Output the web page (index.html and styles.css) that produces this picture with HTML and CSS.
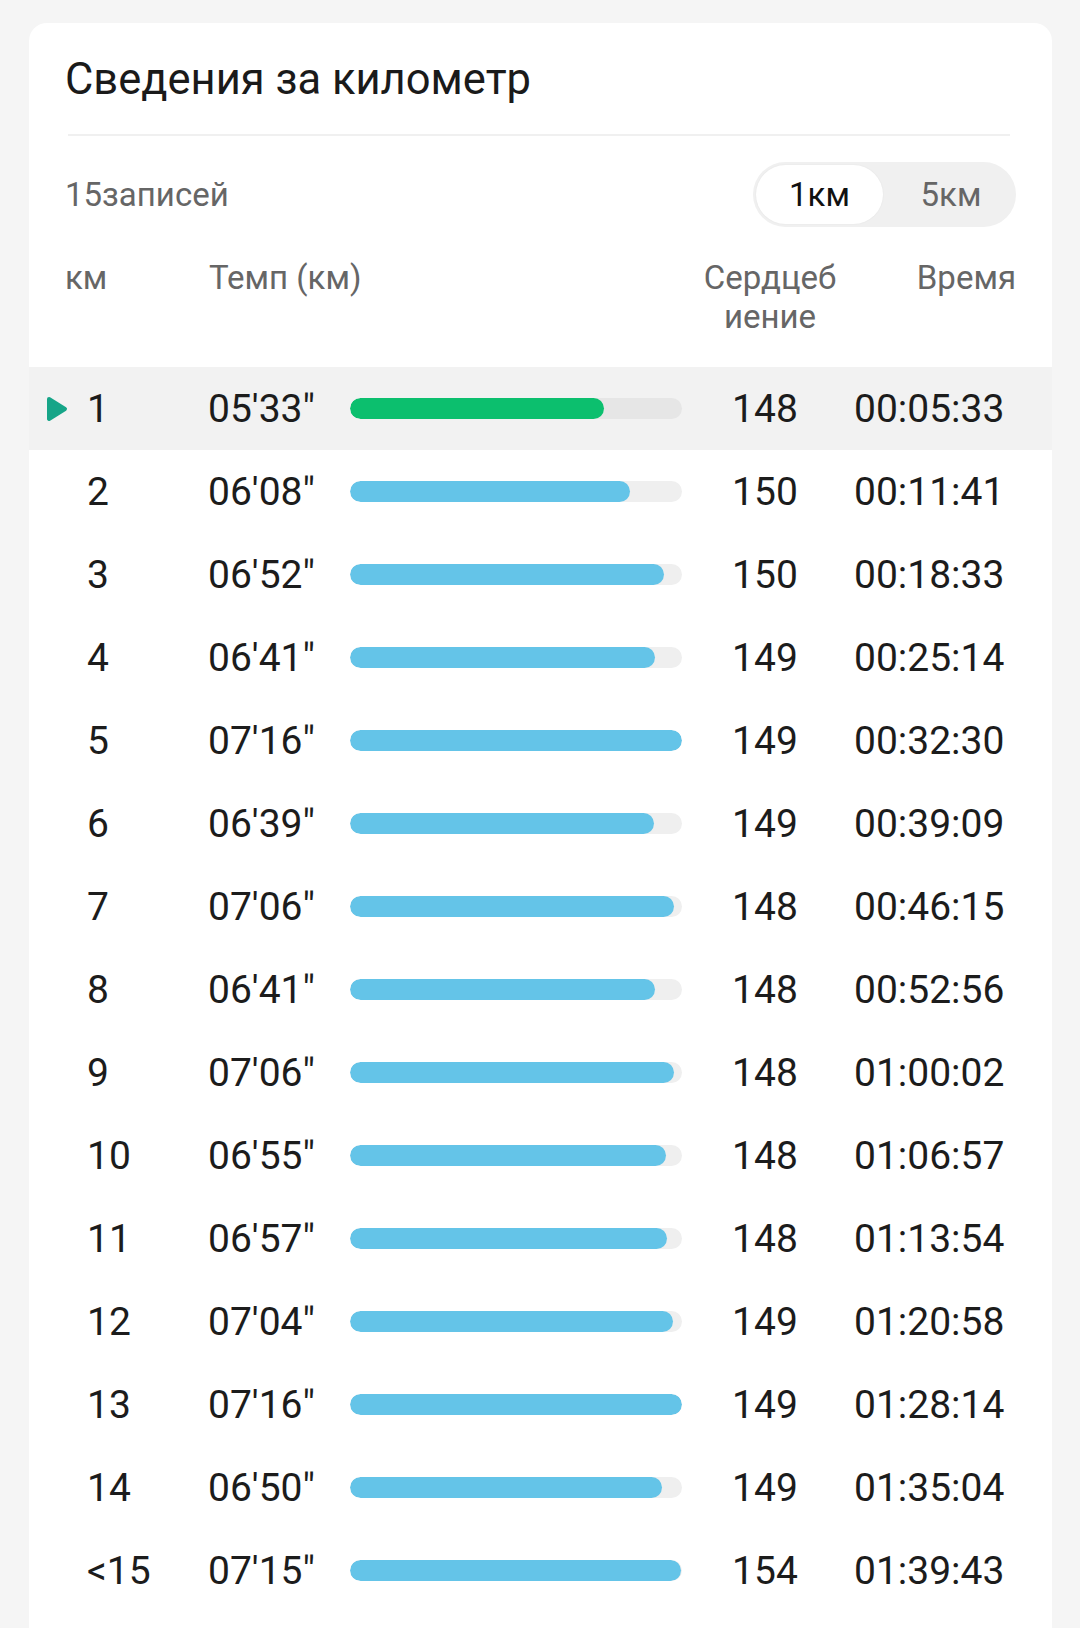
FILE: index.html
```html
<!DOCTYPE html>
<html lang="ru">
<head>
<meta charset="utf-8">
<title>Сведения за километр</title>
<link rel="stylesheet" href="styles.css">
</head>
<body>
<div class="card">
  <div class="card-head">
    <h1 class="title">Сведения за километр</h1>
    <div class="divider"></div>
    <div class="subhead">
      <span class="count">15записей</span>
      <div class="toggle">
        <span class="toggle-item active">1км</span>
        <span class="toggle-item">5км</span>
      </div>
    </div>
    <div class="thead">
      <span class="th th-km">км</span>
      <span class="th th-pace">Темп (км)</span>
      <span class="th th-hr">Сердцеб<br>иение</span>
      <span class="th th-time">Время</span>
    </div>
  </div>
  <div class="rows">
    <div class="row current">
      <span class="marker"><svg width="24" height="28" viewBox="0 0 24 28"><path d="M4 4 L20 14 L4 24 Z" fill="#16a588" stroke="#16a588" stroke-width="4" stroke-linejoin="round"/></svg></span>
      <span class="km">1</span><span class="pace">05'33"</span>
      <span class="bar"><span class="fill green" style="width:76.4%"></span></span>
      <span class="hr">148</span><span class="time">00:05:33</span>
    </div>
    <div class="row">
      <span class="marker"></span>
      <span class="km">2</span><span class="pace">06'08"</span>
      <span class="bar"><span class="fill" style="width:84.4%"></span></span>
      <span class="hr">150</span><span class="time">00:11:41</span>
    </div>
    <div class="row">
      <span class="marker"></span>
      <span class="km">3</span><span class="pace">06'52"</span>
      <span class="bar"><span class="fill" style="width:94.5%"></span></span>
      <span class="hr">150</span><span class="time">00:18:33</span>
    </div>
    <div class="row">
      <span class="marker"></span>
      <span class="km">4</span><span class="pace">06'41"</span>
      <span class="bar"><span class="fill" style="width:92.0%"></span></span>
      <span class="hr">149</span><span class="time">00:25:14</span>
    </div>
    <div class="row">
      <span class="marker"></span>
      <span class="km">5</span><span class="pace">07'16"</span>
      <span class="bar"><span class="fill" style="width:100%"></span></span>
      <span class="hr">149</span><span class="time">00:32:30</span>
    </div>
    <div class="row">
      <span class="marker"></span>
      <span class="km">6</span><span class="pace">06'39"</span>
      <span class="bar"><span class="fill" style="width:91.5%"></span></span>
      <span class="hr">149</span><span class="time">00:39:09</span>
    </div>
    <div class="row">
      <span class="marker"></span>
      <span class="km">7</span><span class="pace">07'06"</span>
      <span class="bar"><span class="fill" style="width:97.7%"></span></span>
      <span class="hr">148</span><span class="time">00:46:15</span>
    </div>
    <div class="row">
      <span class="marker"></span>
      <span class="km">8</span><span class="pace">06'41"</span>
      <span class="bar"><span class="fill" style="width:92.0%"></span></span>
      <span class="hr">148</span><span class="time">00:52:56</span>
    </div>
    <div class="row">
      <span class="marker"></span>
      <span class="km">9</span><span class="pace">07'06"</span>
      <span class="bar"><span class="fill" style="width:97.7%"></span></span>
      <span class="hr">148</span><span class="time">01:00:02</span>
    </div>
    <div class="row">
      <span class="marker"></span>
      <span class="km">10</span><span class="pace">06'55"</span>
      <span class="bar"><span class="fill" style="width:95.2%"></span></span>
      <span class="hr">148</span><span class="time">01:06:57</span>
    </div>
    <div class="row">
      <span class="marker"></span>
      <span class="km">11</span><span class="pace">06'57"</span>
      <span class="bar"><span class="fill" style="width:95.6%"></span></span>
      <span class="hr">148</span><span class="time">01:13:54</span>
    </div>
    <div class="row">
      <span class="marker"></span>
      <span class="km">12</span><span class="pace">07'04"</span>
      <span class="bar"><span class="fill" style="width:97.2%"></span></span>
      <span class="hr">149</span><span class="time">01:20:58</span>
    </div>
    <div class="row">
      <span class="marker"></span>
      <span class="km">13</span><span class="pace">07'16"</span>
      <span class="bar"><span class="fill" style="width:100%"></span></span>
      <span class="hr">149</span><span class="time">01:28:14</span>
    </div>
    <div class="row">
      <span class="marker"></span>
      <span class="km">14</span><span class="pace">06'50"</span>
      <span class="bar"><span class="fill" style="width:94.0%"></span></span>
      <span class="hr">149</span><span class="time">01:35:04</span>
    </div>
    <div class="row">
      <span class="marker"></span>
      <span class="km">&lt;15</span><span class="pace">07'15"</span>
      <span class="bar"><span class="fill" style="width:99.8%"></span></span>
      <span class="hr">154</span><span class="time">01:39:43</span>
    </div>
  </div>
</div>
</body>
</html>
```

FILE: styles.css
```css
* { box-sizing: border-box; }
html, body { margin: 0; padding: 0; }
body {
  background: #f5f5f5;
  font-family: Roboto, "Noto Sans", "Liberation Sans", sans-serif;
  color: #1c1c1c;
  padding-top: 23px;
}
.card {
  margin: 0 28px 0 29px;
  background: #ffffff;
  border-radius: 18px;
  padding-top: 34px;
  padding-bottom: 40px;
}
.card-head { padding: 0 36px; }
.title {
  margin: 0;
  font-size: 43.5px;
  line-height: 46px;
  font-weight: 400;
  color: #1a1a1a;
}
.divider {
  margin: 31px 6px 0 3px;
  height: 2px;
  background: #f0f0f0;
}
.subhead {
  margin-top: 26px;
  display: flex;
  align-items: center;
  justify-content: space-between;
}
.count {
  font-size: 33px;
  color: #666666;
}
.toggle {
  display: flex;
  align-items: center;
  height: 65px;
  width: 263px;
  padding: 3px;
  border-radius: 33px;
  background: #f0f0f0;
}
.toggle-item {
  flex: 1;
  height: 59px;
  display: flex;
  align-items: center;
  justify-content: center;
  font-size: 33px;
  color: #666666;
  border-radius: 30px;
}
.toggle-item:not(.active) { padding-left: 6px; }
.toggle-item.active {
  flex: 0 0 127px;
  background: #ffffff;
  color: #111111;
  box-shadow: 0 0 2px rgba(0,0,0,0.06);
}
.thead {
  margin-top: 31px;
  display: grid;
  grid-template-columns: 144px 1fr 150px 171px;
  font-size: 33px;
  line-height: 39px;
  color: #666666;
}
.th-hr { text-align: center; }
.th-time { text-align: right; }
.rows { margin-top: 31px; }
.row {
  display: grid;
  grid-template-columns: 38px 121px 142px 332px 166px 1fr;
  align-items: center;
  height: 83px;
  padding: 0 36px 0 20px;
  font-size: 39px;
  color: #1c1c1c;
}
.row.current { background: #f2f2f2; }
.marker { display: flex; align-items: center; margin-left: -4px; }
.marker svg { display: block; }
.hr { text-align: center; }
.time { padding-left: 6px; }
.bar {
  display: block;
  height: 21px;
  border-radius: 11px;
  background: #efefef;
  overflow: hidden;
}
.row.current .bar { background: #e6e6e6; }
.fill {
  display: block;
  height: 100%;
  border-radius: 11px;
  background: #64c4e8;
}
.fill.green { background: #0cbf6e; }
```
